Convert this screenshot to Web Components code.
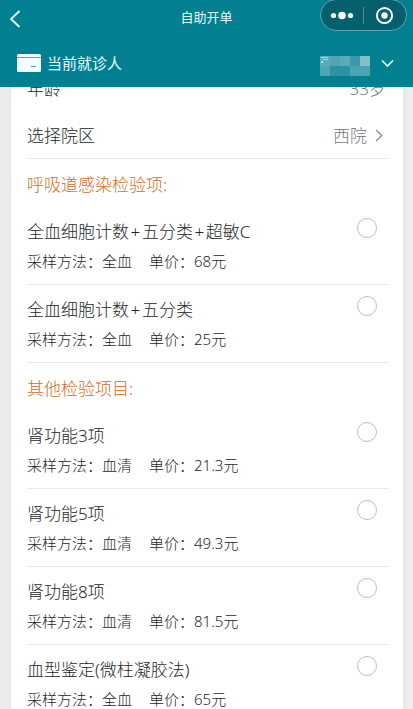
<!DOCTYPE html>
<html lang="zh-CN">
<head>
<meta charset="utf-8">
<title>自助开单</title>
<style>
html, body { margin: 0; height: 100%; overflow: hidden; }
body { font-family: "Noto Sans", "Noto Sans CJK SC", sans-serif; font-weight: 300; color: #262626; background: #ebedef; }
</style>
</head>
<body>
<order-page></order-page>
<script>
function define(name, html) {
  const t = document.createElement('template');
  t.innerHTML = html;
  customElements.define(name, class extends HTMLElement {
    constructor() {
      super();
      this.attachShadow({ mode: 'open' }).append(t.content.cloneNode(true));
    }
  });
}

define('nav-bar', `
<style>
:host { display: grid; grid-template-columns: 1fr auto 1fr; align-items: center; height: 34px; color: #e6fbfc; }
.back { margin: 3px 0 0 9px; display: block; }
.title { font: 13px/18px "Noto Sans CJK SC", sans-serif; }
.capsule { justify-self: end; box-sizing: border-box; width: 87px; height: 32px; margin: -4px 6px 0 0; border: 1px solid #5fa5af; border-radius: 16px; background: #055f6d; }
.capsule svg { display: block; }
</style>
<svg class="back" width="12" height="18" viewBox="0 0 12 18" fill="none" stroke="#e9ffff" stroke-width="1.8"><path d="M10.500 1 2 9l8.500 8"/></svg>
<div class="title"><slot></slot></div>
<div class="capsule"><svg width="85" height="30" viewBox="0 0 85 30">
<g fill="#fff"><circle cx="12.500" cy="15.500" r="2.600"/><circle cx="21" cy="15.500" r="3.800"/><circle cx="29.500" cy="15.500" r="2.600"/><circle cx="63.500" cy="15.500" r="3.200"/></g>
<path d="M42.500 7v17" stroke="#4e8f99"/><circle cx="63.500" cy="15.500" r="7.600" fill="none" stroke="#fff" stroke-width="2"/></svg></div>`);

define('patient-bar', `
<style>
:host { display: flex; align-items: center; height: 53px; box-sizing: border-box; padding: 5px 19px 0 17px; color: #e6fbfc; }
svg { display: block; }
.label { flex: 1; margin-left: 6px; font: 15px/20px "Noto Sans CJK SC", sans-serif; }
.name { margin: 6px 11px 0 0; }
</style>
<svg width="24" height="18" viewBox="0 0 24 18"><path d="M1.500 0h21Q24 0 24 1.500V3H0V1.500Q0 0 1.500 0ZM0 4h24v12.500q0 1.500-1.500 1.500h-21Q0 18 0 16.500Z" fill="#f4ffff"/><path d="M0 3.500h24" stroke="#4da5b0"/><path d="M14 12.500h5" stroke="#69979b" stroke-width="1.200"/></svg>
<div class="label"><slot></slot></div>
<svg class="name" width="50" height="20" viewBox="0 0 50 20" shape-rendering="crispEdges">
<path fill="#48a0af" d="M0 0h50v20H0z"/><path fill="#5aabb8" d="M0 0h10v10H0zM20 0h10v10H20z"/><path fill="#50a5b3" d="M10 0h10v10H10zM0 10h10v10H0z"/><path fill="#3b9aaa" d="M30 0h10v10H30z"/><path fill="#7fbfc8" d="M40 0h10v10H40z"/><path fill="#2f92a2" d="M10 10h20v10H10z"/><path fill="#4ca4b1" d="M30 10h20v10H30z"/><path fill="#a5dce1" d="M1 1h7v1H1zM3 3h5v1H3zM1 5h2v2H1z"/></svg>
<svg width="13" height="9" viewBox="0 0 13 9" fill="none" stroke="#e9ffff" stroke-width="1.600"><path d="M1 1.500 6.500 7 12 1.500"/></svg>`);

define('info-row', `
<style>
:host { display: flex; align-items: center; height: 48px; box-sizing: border-box; padding-top: 2px; font-size: 17px; line-height: 24px; }
:host([link]) { height: 47px; padding-top: 2px; border-bottom: 1px solid #e7e7e7; }
.label { flex: 1; }
.value { color: #777; margin-right: 3px; }
svg { display: none; margin: -2px 6px 0 0; }
:host([link]) svg { display: block; }
:host([link]) .value { margin-right: 8px; }
</style>
<div class="label"><slot></slot></div><div class="value"><slot name="value"></slot></div>
<svg width="8" height="13" viewBox="0 0 8 13" fill="none" stroke="#888" stroke-width="1.200"><path d="M1 1l5.800 5.500L1 12"/></svg>`);

define('section-title', `
<style>:host { display: block; height: 48px; box-sizing: border-box; padding-top: 14px; font-size: 17px; line-height: 24px; color: #d26c1c; }</style><slot></slot>`);

define('test-item', `
<style>
:host { display: flex; justify-content: space-between; height: 78px; box-sizing: border-box; border-bottom: 1px solid #e9e9e9; padding-top: 13px; }
.title { font-size: 17px; line-height: 24px; white-space: nowrap; }
.meta { display: flex; gap: 17px; margin-top: 6px; font-size: 15px; line-height: 22px; white-space: nowrap; }
.radio { box-sizing: border-box; width: 20px; height: 20px; margin: -2px 12px 0 0; border: 1px solid #bdbdbd; border-radius: 50%; }
</style>
<div><div class="title"><slot></slot></div>
<div class="meta"><span>采样方法：<slot name="sample"></slot></span><span>单价：<slot name="price"></slot></span></div></div>
<div class="radio"></div>`);

define('order-page', `
<style>
:host { display: flex; flex-direction: column; height: 709px; overflow: hidden; }
header { flex: none; height: 87px; background: #028091; }
main { flex: 1; min-height: 0; overflow: hidden; padding: 0 10px 0 11px; }
.card { box-sizing: border-box; padding: 0 14px 0 16px; background: #fff; height: 100%; overflow: hidden; box-shadow: 0 0 5px #dfe1e3; }
info-row:first-child { margin-top: -23px; }
.p { margin: 0 1.700px 0 1.500px; }
</style>
<header><nav-bar>自助开单</nav-bar><patient-bar>当前就诊人</patient-bar></header>
<main><div class="card">
<info-row>年龄<span slot="value">33岁</span></info-row>
<info-row link>选择院区<span slot="value">西院</span></info-row>
<section-title>呼吸道感染检验项:</section-title>
<test-item><span>全血细胞计数<span class="p">+</span>五分类<span class="p">+</span>超敏C</span><span slot="sample">全血</span><span slot="price">68元</span></test-item>
<test-item><span>全血细胞计数<span class="p">+</span>五分类</span><span slot="sample">全血</span><span slot="price">25元</span></test-item>
<section-title>其他检验项目:</section-title>
<test-item>肾功能3项<span slot="sample">血清</span><span slot="price">21.3元</span></test-item>
<test-item>肾功能5项<span slot="sample">血清</span><span slot="price">49.3元</span></test-item>
<test-item>肾功能8项<span slot="sample">血清</span><span slot="price">81.5元</span></test-item>
<test-item>血型鉴定(微柱凝胶法)<span slot="sample">全血</span><span slot="price">65元</span></test-item>
</div></main>`);
</script>
</body>
</html>
